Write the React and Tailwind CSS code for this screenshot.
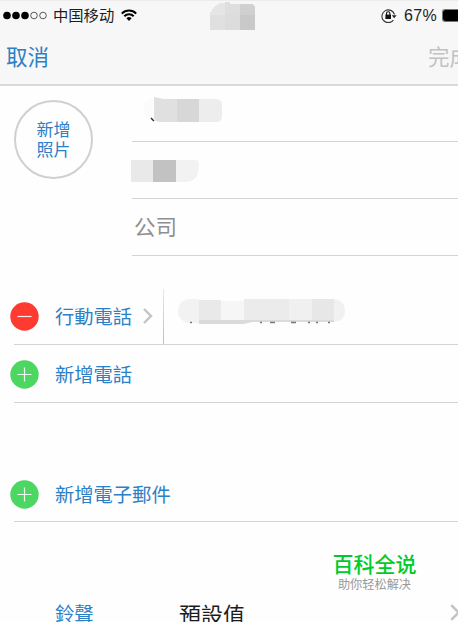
import React from "react";

const Chevron = ({ className }) => (
  <svg viewBox="0 0 10 16" className={className} fill="none" stroke="#c4c4c8" strokeWidth="2.4">
    <path d="M1 1l7 7-7 7" />
  </svg>
);

const RoundButton = ({ remove }) => (
  <svg viewBox="0 0 29 29" className="h-[29px] w-[29px] shrink-0">
    <circle cx="14.5" cy="14.5" r="14.2" fill={remove ? "#ff3a30" : "#4cd763"} />
    <path
      d={remove ? "M7.5 14.5h14" : "M7.5 14.5h14M14.5 7.5v14"}
      stroke="#fff"
      strokeOpacity="0.9"
      strokeWidth="1.2"
    />
  </svg>
);

const StatusBar = () => (
  <div className="relative flex h-[30px] items-center border-t border-[#ececec] text-[#1c1c1c]">
    <svg viewBox="0 0 46 9" className="ml-[3px] h-[9px] w-[46px] shrink-0">
      <circle cx="4" cy="4.5" r="3.8" fill="#000" />
      <circle cx="13" cy="4.5" r="3.8" fill="#000" />
      <circle cx="22" cy="4.5" r="3.8" fill="#000" />
      <circle cx="31" cy="4.5" r="3.3" fill="none" stroke="#333" strokeWidth="0.8" />
      <circle cx="40" cy="4.5" r="3.3" fill="none" stroke="#333" strokeWidth="0.8" />
    </svg>
    <span className="mb-px ml-[4px] text-[15.3px] leading-none">中国移动</span>
    <svg viewBox="0 0 16 12" className="mb-[2px] ml-[7px] h-3 w-4 shrink-0" fill="none" stroke="#000" strokeWidth="2">
      <path d="M0.8 4.6a10.2 10.2 0 0 1 14.4 0M3.3 7.3a6.6 6.6 0 0 1 9.4 0" />
      <path d="M8 12L5.4 9.3a3.7 3.7 0 0 1 5.2 0z" fill="#000" stroke="none" />
    </svg>
    <svg viewBox="0 0 46 28" className="absolute left-[210px] top-[1px] h-7 w-[46px]" shapeRendering="crispEdges">
      <path d="M0 11L4 5L10 1H15V13H0z" fill="#e5e5e5" />
      <path d="M15 0H20V2H30V13H15z" fill="#dedede" />
      <path d="M30 2H42L45 4V13H30z" fill="#d0d0d0" />
      <path d="M0 13H15V28H0z" fill="#e0e0e0" />
      <path d="M15 13H30V28H15z" fill="#dcdcdc" />
      <path d="M30 13H45V28H30z" fill="#c9c9c9" />
    </svg>
    <div className="ml-auto flex items-center">
      <svg viewBox="0 0 16 15" className="mb-px h-[15px] w-4" fill="none" stroke="#333" strokeWidth="1.1">
        <path d="M12.4 12.2A6.400 6.400 0 1 1 13.500 6.500" />
        <path d="M10.800 7.200h4.800l-2.400 3z" fill="#222" stroke="none" />
        <rect x="4.400" y="6.600" width="5.600" height="4.400" fill="#111" stroke="none" />
        <path d="M5.500 7V5.400a1.700 1.700 0 0 1 3.400 0V7" stroke="#111" />
      </svg>
      <span className="ml-[7px] w-[38px] whitespace-nowrap font-['Liberation_Sans'] text-[16px] leading-none tracking-[0.3px]">67%</span>
      <div className="mb-px h-[13px] w-4 rounded-l-[3px] border border-r-0 border-[#777] bg-black bg-clip-padding" />
    </div>
  </div>
);

const Header = () => (
  <header className="h-[86px] border-b-2 border-[#dadada] bg-[#f7f7f7]">
    <StatusBar />
    <div className="flex h-[51px] items-center justify-between pl-[6px]">
      <span className="text-[21.5px] leading-none text-[#2b80c6]">取消</span>
      <span className="w-[30px] overflow-hidden whitespace-nowrap text-[21.5px] leading-[30px] text-[#c2c2c2]">完成</span>
    </div>
  </header>
);

const FirstNameMask = () => (
  <svg viewBox="0 0 80 30" className="mb-[6px] ml-[12px] h-[30px] w-20">
    <path d="M0 14Q0 3 9 2V26Q0 24 0 14z" fill="#fbfbfb" />
    <path d="M10 1L20 3H33V26H17Q11 26 10 22z" fill="#e0e0e0" />
    <path d="M33 3H55V26H33z" fill="#d7d7d7" />
    <path d="M55 3H72Q78 3 78 9V20Q78 26 72 26H55z" fill="#ededed" />
    <path d="M7 22l3 3" stroke="#333" strokeWidth="1.5" />
  </svg>
);

const LastNameMask = () => (
  <svg viewBox="0 0 70 24" className="-ml-px mt-[2px] h-6 w-[70px]">
    <path d="M0 1H22V23H0z" fill="#e9e9e9" />
    <path d="M22 1H45V23H22z" fill="#c2c2c2" />
    <path d="M45 1H64Q68 1 68 6Q68 23 54 23H45z" fill="#f2f2f2" />
  </svg>
);

const PhoneMask = () => (
  <svg viewBox="0 0 170 28" className="ml-[13px] h-7 w-[170px]">
    <path d="M13 1H22V25H13A12 12 0 0 1 13 1z" fill="#f2f2f2" />
    <path d="M22 2H44V26H22z" fill="#e9e9e9" />
    <path d="M44 3H67V26H44z" fill="#f6f6f6" />
    <path d="M67 1H112V24H67z" fill="#ebebeb" />
    <path d="M112 1H135V24H112z" fill="#f0f0f0" />
    <path d="M135 1H157V24H135z" fill="#e7e7e7" />
    <path d="M157 1Q168 3 168 12.500Q168 23 157 24z" fill="#f1f1f1" />
    <path d="M22 22H157V24H76L66 26H22z" fill="#dadada" />
    <path d="M13 24.500h2M83 24.500h2M93 24.500h5M114 24.500h5M131 24.500h2M139 24.500h2M151 24.500h2" stroke="#777" strokeWidth="1.3" />
  </svg>
);

export default function App() {
  return (
    <div className="h-[622px] w-[458px] overflow-hidden bg-[#fefefe] font-['Noto_Sans_CJK_SC',sans-serif] font-normal">
      <Header />
      <section className="flex h-[170px] pl-[14px]">
        <div className="mt-[14px] flex h-[79px] w-[79px] shrink-0 flex-col items-center justify-center rounded-full border-2 border-[#d0d0d0] pb-[2px] text-center text-[17px] leading-[20px] text-[#2b80c6]">
          <span>新增</span>
          <span>照片</span>
        </div>
        <div className="ml-[39px] flex flex-1 flex-col">
          <div className="flex h-[56px] items-center border-b border-[#d4d4d4]">
            <FirstNameMask />
          </div>
          <div className="flex h-[57px] items-center border-b border-[#d4d4d4]">
            <LastNameMask />
          </div>
          <div className="flex h-[57px] items-center border-b border-[#d4d4d4] pb-[2px] pl-[2px] text-[21.5px] text-[#8f8f8f]">
            公司
          </div>
        </div>
      </section>

      <section className="mt-[33px] pl-[10px] text-[19.3px] text-[#2b80c6]">
        <div className="flex h-[55px] items-center">
          <RoundButton remove />
          <span className="mb-px ml-[16px] w-[78px] whitespace-nowrap">行動電話</span>
          <Chevron className="mb-[2px] ml-[10px] h-4 w-[10px]" />
          <div className="ml-[10px] h-full w-px bg-linear-to-b from-[#e8e8e8] to-[#bdbdbd]" />
          <div className="mb-[10px]">
            <PhoneMask />
          </div>
        </div>
        <div className="ml-1 h-px bg-[#d4d4d4]" />
        <div className="flex h-[57px] items-center pt-[2px]">
          <RoundButton />
          <span className="mb-px ml-[16px]">新增電話</span>
        </div>
        <div className="ml-1 h-px bg-[#d4d4d4]" />
      </section>

      <section className="mt-[63px] pl-[10px] text-[19.3px] text-[#2b80c6]">
        <div className="flex h-[55px] items-center pt-[2px]">
          <RoundButton />
          <span className="mb-px ml-[16px]">新增電子郵件</span>
        </div>
        <div className="ml-1 h-px bg-[#d4d4d4]" />
      </section>

      <div className="ml-[332px] mt-[28px] flex w-[85px] flex-col items-center whitespace-nowrap">
        <span className="text-[21px] font-medium leading-[27px] text-[#00cb2c]">百科全说</span>
        <span className="text-[12.2px] leading-[14px] text-[#999]">助你轻松解决</span>
      </div>

      <div className="mt-[7px] flex h-[30px] items-center pl-[55px]">
        <span className="w-[124px] text-[19.3px] text-[#2b80c6]">鈴聲</span>
        <span className="text-[22px] text-[#1c1c1c]">預設值</span>
        <Chevron className="ml-auto -mr-[3px] mb-px h-[17px] w-[11px]" />
      </div>
    </div>
  );
}
